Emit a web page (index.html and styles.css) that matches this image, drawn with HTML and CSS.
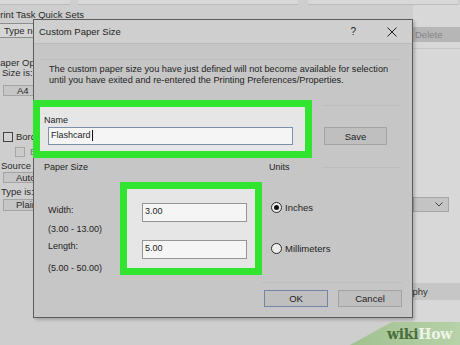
FILE: index.html
```html
<!DOCTYPE html>
<html lang="en">
<head>
  <meta charset="UTF-8">
  <title>Custom Paper Size</title>
  <link rel="stylesheet" href="styles.css">
</head>
<body>
<div class="screen">
  <div class="topstrip"><span class="tab tab-a"></span><span class="tab tab-b"></span><span class="tab tab-c"></span></div>

  <div class="backdrop">
    <!-- printing preferences, left column -->
    <div class="left-pane">
      <div class="caption cut">Print Task Quick Sets</div>
      <!-- everything below is cut by the dialog -->
      <div class="under">
        <div class="field">Type new Quick Set name here</div>
        <div class="caption cut opts">Paper Options</div>
        <div class="caption size">Size is:</div>
        <div class="pill a4">A4</div>
        <div class="check"><span class="box"></span>Borderless Printing</div>
        <div class="check sub"><span class="box"></span>Borderless Auto Fit</div>
        <div class="caption src">Source is:</div>
        <div class="pill auto">Automatically Select</div>
        <div class="caption src">Type is:</div>
        <div class="pill plain">Plain Paper</div>
      </div>
    </div>

    <!-- right column -->
    <div class="right-pane">
      <div class="delete">Delete</div>
      <div class="rule"></div>
      <div class="combo">
        <svg width="8" height="5" viewBox="0 0 8 5"><polyline points="0.5,0.5 4,4 7.5,0.5" fill="none" stroke="#444" stroke-width="1"/></svg>
      </div>
      <div class="bar">Photography</div>
    </div>
  </div>

  <!-- Custom Paper Size dialog -->
  <div class="dialog">
    <div class="titlebar">
      <span class="title">Custom Paper Size</span>
      <span class="help">?</span>
      <svg class="close" width="10" height="10" viewBox="0 0 10 10"><path d="M0.5 0.5 L9.5 9.5 M9.5 0.5 L0.5 9.5" stroke="#222" stroke-width="1"/></svg>
    </div>

    <p class="intro">The custom paper size you have just defined will not become available for selection<br>until you have exited and re-entered the Printing Preferences/Properties.</p>

    <div class="name-row">
      <div class="hl name-hl">
        <div class="lbl">Name</div>
        <div class="input name-input">Flashcard<span class="caret"></span></div>
      </div>
      <div class="side">
        <button class="btn save">Save</button>
      </div>
    </div>

    <div class="heads">
      <span class="paper-head">Paper Size</span>
      <span>Units</span>
      <span class="head-rule"></span>
    </div>

    <div class="size-row">
      <div class="size-labels">
        <div class="w">Width:</div>
        <div class="r1">(3.00 - 13.00)</div>
        <div class="l">Length:</div>
        <div class="r2">(5.00 - 50.00)</div>
      </div>
      <div class="hl size-hl">
        <div class="input num">3.00</div>
        <div class="input num len">5.00</div>
      </div>
      <div class="units">
        <div class="radio"><span class="dot on"></span>Inches</div>
        <div class="radio mm"><span class="dot"></span>Millimeters</div>
      </div>
    </div>

    <div class="sep"></div>
    <div class="actions">
      <button class="btn ok">OK</button>
      <button class="btn">Cancel</button>
    </div>
  </div>

  <div class="logo"><span class="wiki">wiki</span><span class="how">How</span></div>
</div>
</body>
</html>
```

FILE: styles.css
```css
* { box-sizing: border-box; }

body {
  margin: 0;
  background: #cecece;
  font-family: "Liberation Sans", Arial, sans-serif;
  color: #1e1e1e;
}

.screen {
  position: relative;
  width: 460px;
  height: 345px;
  overflow: hidden;
  display: flex;
  flex-direction: column;
}

/* strip of tabs along the top edge */
.topstrip {
  height: 5px;
  display: flex;
  gap: 4px;
}
.topstrip .tab {
  background: #d8d8d8;
  border-bottom: 1px solid #bcbcbc;
}
.tab-a { width: 70px; }
.tab-b { width: 220px; margin-left: 4px; }
.tab-c { width: 150px; margin-left: 6px; }

.backdrop {
  flex: 1;
  display: flex;
}

/* left column */
.left-pane {
  width: 34px;
  padding-top: 5px;
  font-size: 9.5px;
  line-height: 10px;
  color: #2a2a2a;
  white-space: nowrap;
}
.under {
  width: 34px;
  overflow: hidden;
}
.caption { height: 10px; padding-left: 1px; }
.caption.cut { margin-left: -6px; padding-left: 0; }
.caption.size { padding-left: 2px; }
.caption.opts { margin-top: 20px; }
.caption.src { margin-top: 4px; }

.field {
  margin: 3px 0 0 -1px;
  height: 15px;
  padding: 2px 0 0 4px;
  border: 1px solid #8e8e8e;
  background: #d6d6d6;
  width: 60px;
}

.pill {
  margin-left: 3px;
  width: 60px;
  height: 11px;
  background: #c6c6c6;
  border: 1px solid #a4a4a4;
  overflow: hidden;
  line-height: 9px;
}
.pill.a4 { margin-top: 7px; padding-left: 13px; }
.pill.auto { margin-top: 1px; padding-left: 12px; }
.pill.plain { margin-top: 2px; height: 12px; padding-left: 12px; }

.check {
  display: flex;
  align-items: center;
  gap: 3px;
  height: 10px;
  margin: 36px 0 0 3px;
}
.check .box {
  flex: none;
  width: 10px;
  height: 10px;
  border: 1px solid #444;
  background: #d2d2d2;
}
.check.sub { margin: 5px 0 0 15px; color: #777; }
.check.sub .box { border-color: #a6a6a6; background: #cbcbcb; margin-right: 2px; }

/* right column, visible right of the dialog */
.right-pane {
  margin-left: auto;
  width: 47px;
  overflow: hidden;
  background: #d8d8d8;
  font-size: 9.5px;
  white-space: nowrap;
}
.delete {
  margin-top: 22px;
  height: 15px;
  line-height: 15px;
  padding-left: 2px;
  background: #b6b6b6;
  color: #858585;
}
.rule {
  margin-top: 6px;
  height: 1px;
  background: #c6c6c6;
}
.combo {
  margin-top: 148px;
  width: 36px;
  height: 15px;
  background: #c4c4c4;
  border: 1px solid #a6a6a6;
  display: flex;
  justify-content: flex-end;
  align-items: center;
  padding-right: 5px;
}
.bar {
  margin: 71px 0 0 -43px;
  height: 17px;
  line-height: 17px;
  padding-left: 4px;
  background: #c6c6c6;
  color: #333;
}

/* the dialog floats over the preferences window */
.dialog {
  position: absolute;
  left: 33px;
  top: 19px;
  width: 380px;
  height: 299px;
  background: #c6c6c6;
  border: 1px solid #5c5c5c;
  box-shadow: 2px 2px 3px rgba(0, 0, 0, 0.2);
  display: flex;
  flex-direction: column;
  font-size: 9px;
  line-height: 11px;
}

.titlebar {
  height: 24px;
  flex: none;
  display: flex;
  align-items: center;
  padding: 0 15px 0 5px;
  background: #cfcfcf;
  border-bottom: 1px solid #bcbcbc;
  font-size: 9.5px;
}
.titlebar .help { margin-left: auto; margin-right: 31px; font-size: 10px; }

.intro {
  margin: 15px 12px 0 6px;
  padding: 4px 0 0 9px;
  border-top: 1px solid #bdbdbd;
  font-size: 9.2px;
  white-space: nowrap;
}

.hl {
  border: 7px solid #30e430;
  background: #e6e6e6;
}

.name-row {
  display: flex;
  margin: 14px 0 0 -1px;
}
.name-hl {
  width: 279px;
  padding: 8px 0 6px 4px;
}
.name-hl .input { margin: 1px 0 0 4px; width: 245px; height: 18px; border-color: #7d8fab; }

.input {
  background: #f5f5f5;
  border: 1px solid #959595;
  padding: 2px 0 0 2px;
  display: flex;
  align-items: flex-start;
}
.caret {
  width: 1px;
  height: 11px;
  background: #111;
  margin-left: 1px;
}

.side {
  margin: 5px 0 0 10px;
  width: 78px;
  border-top: 1px solid #bdbdbd;
}

.btn {
  font: inherit;
  font-size: 9.5px;
  color: #1e1e1e;
  background: #bfbfbf;
  border: 1px solid #a3a3a3;
  padding: 0;
}
.save { margin: 21px 0 0 2px; width: 63px; height: 18px; }

.heads {
  display: flex;
  align-items: center;
  margin-top: 4px;
  padding-left: 10px;
}
.paper-head { width: 225px; }
.head-rule {
  margin-left: auto;
  margin-right: 12px;
  width: 78px;
  height: 1px;
  background: #bdbdbd;
}

.size-row {
  display: flex;
  margin-top: 9px;
}
.size-labels {
  width: 86px;
  padding: 23px 0 0 14px;
  white-space: nowrap;
}
.size-labels .r1 { margin-top: 8px; }
.size-labels .l { margin-top: 6px; }
.size-labels .r2 { margin-top: 11px; }

.size-hl {
  width: 142px;
  height: 93px;
  padding: 14px 0 0 15px;
}
.num { width: 105px; height: 19px; }
.num.len { margin-top: 18px; }

.units { padding: 20px 0 0 9px; }
.radio {
  display: flex;
  align-items: center;
  gap: 3px;
  height: 11px;
  font-size: 9.5px;
}
.radio.mm { margin-top: 30px; }
.dot {
  width: 11px;
  height: 11px;
  border-radius: 50%;
  border: 1px solid #2a2a2a;
  background: #ececec;
  display: flex;
  align-items: center;
  justify-content: center;
}
.dot.on::after {
  content: "";
  width: 5px;
  height: 5px;
  border-radius: 50%;
  background: #111;
}

.sep {
  margin: 7px 10px 0 228px;
  height: 1px;
  background: #bdbdbd;
}
.actions {
  display: flex;
  justify-content: flex-end;
  gap: 10px;
  margin-top: 7px;
  padding-right: 10px;
}
.actions .btn { width: 64px; height: 17px; }
.actions .ok { border-color: #7583a6; }

/* wikiHow watermark */
.logo {
  position: absolute;
  right: 0;
  bottom: 0;
  width: 110px;
  height: 23px;
  padding: 3px 0 0 37px;
  background: linear-gradient(90deg, #a0c190, #b7d1a8);
  clip-path: polygon(42px 0, 100% 0, 100% 100%, 0 100%);
  font-family: "DejaVu Serif", serif;
  font-weight: bold;
  font-size: 14px;
  line-height: 18px;
  letter-spacing: -0.3px;
}
.logo .wiki { color: #4b6e3d; }
.logo .how { color: #eef4e8; }
```
